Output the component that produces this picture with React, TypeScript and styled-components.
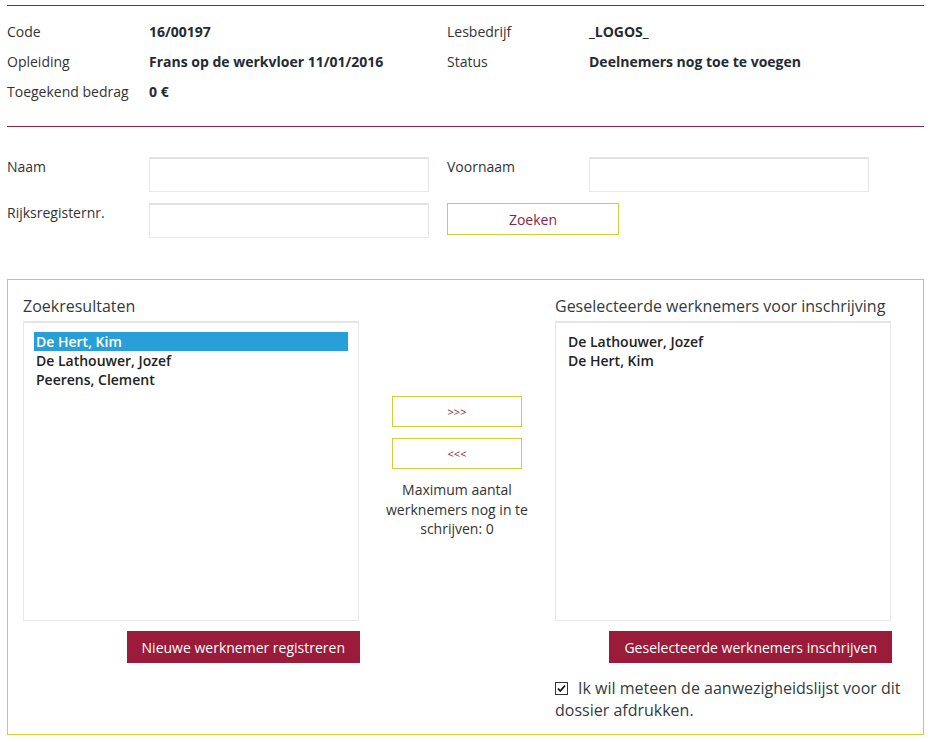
import React from "react";
import styled, { createGlobalStyle } from "styled-components";

const GlobalStyle = createGlobalStyle`
  body {
    margin: 0;
    background: #fff;
    font-family: "Open Sans", "Noto Sans", Arial, sans-serif;
    color: #333;
  }
`;

const maroon = "#8a2444";
const lime = "#d0d032";

const Page = styled.div`
  width: 917px;
  padding: 5px 7px 0 7px;
`;

const InfoSection = styled.section`
  border-top: 1px solid ${maroon};
  border-bottom: 1px solid ${maroon};
  padding: 16px 0 24px 0;
  display: grid;
  grid-template-columns: 142px 298px 142px 1fr;
  row-gap: 10px;
  font-size: 14px;
  line-height: 20px;
`;

const Label = styled.div`
  color: #333;
`;

const Value = styled.div`
  font-weight: 700;
  color: #222c32;
`;

const SearchForm = styled.form`
  margin-top: 30px;
  display: grid;
  grid-template-columns: 142px 298px 142px 1fr;
  row-gap: 11px;
  font-size: 14px;
  line-height: 20px;
  align-items: start;
`;

const Input = styled.input`
  box-sizing: border-box;
  width: 280px;
  height: 35px;
  border: 1px solid #e6e6e6;
  border-top: 2px solid #e2e2e2;
  background: #fff;
  outline: none;
`;

const OutlineButton = styled.button<{ $w: number; $h: number; $size?: number }>`
  box-sizing: border-box;
  width: ${(p) => p.$w}px;
  height: ${(p) => p.$h}px;
  border: 1px solid ${lime};
  background: #fff;
  color: ${maroon};
  font-family: "Open Sans", Arial, sans-serif;
  font-size: ${(p) => p.$size ?? 14}px;
  padding: 0;
  cursor: pointer;
`;

const Panel = styled.section`
  margin-top: 41px;
  border: 1px solid ${lime};
  padding: 15px 0 13px 15px;
  display: grid;
  grid-template-columns: 336px 196px 353px;
`;

const Column = styled.div`
  display: flex;
  flex-direction: column;
`;

const ColumnTitle = styled.h2`
  margin: 0 0 4px 0;
  font-size: 16px;
  font-weight: 400;
  line-height: 22px;
  color: #333b40;
`;

const ListBox = styled.div`
  box-sizing: border-box;
  width: 336px;
  height: 300px;
  border: 1px solid #e8e8e8;
  border-top: 2px solid #e4e4e4;
  padding: 9px 10px 0 10px;
`;

const ListItem = styled.div<{ $selected?: boolean }>`
  font-size: 14px;
  font-weight: 600;
  line-height: 19px;
  padding-left: 2px;
  color: ${(p) => (p.$selected ? "#fff" : "#222")};
  background: ${(p) => (p.$selected ? "#289fd8" : "transparent")};
`;

const ButtonRow = styled.div`
  width: 337px;
  display: flex;
  justify-content: flex-end;
  margin-top: 10px;
`;

const SolidButton = styled.button`
  height: 32px;
  padding: 0 15px;
  border: none;
  background: #9a1b3a;
  color: #fff;
  font-family: "Open Sans", Arial, sans-serif;
  font-size: 14px;
  cursor: pointer;
`;

const Middle = styled.div`
  display: flex;
  flex-direction: column;
  align-items: center;
  padding-top: 101px;
  gap: 11px;
`;

const MaxNote = styled.p`
  margin: 0;
  width: 150px;
  text-align: center;
  font-size: 14px;
  line-height: 19.5px;
  color: #333;
`;

const CheckLine = styled.label`
  display: block;
  margin-top: 14px;
  font-size: 16px;
  line-height: 22px;
  color: #333b40;
`;

const Box = styled.span`
  display: inline-block;
  box-sizing: border-box;
  width: 13px;
  height: 13px;
  border: 1px solid #333;
  margin-right: 10px;
  vertical-align: -1px;
  background: #fff;
  position: relative;

  svg {
    position: absolute;
    left: 0;
    top: 0;
  }
`;

const searchResults = ["De Hert, Kim", "De Lathouwer, Jozef", "Peerens, Clement"];
const selected = ["De Lathouwer, Jozef", "De Hert, Kim"];

export default function App() {
  return (
    <Page>
      <GlobalStyle />
      <InfoSection>
        <Label>Code</Label>
        <Value>16/00197</Value>
        <Label>Lesbedrijf</Label>
        <Value>_LOGOS_</Value>
        <Label>Opleiding</Label>
        <Value>Frans op de werkvloer 11/01/2016</Value>
        <Label>Status</Label>
        <Value>Deelnemers nog toe te voegen</Value>
        <Label>Toegekend bedrag</Label>
        <Value>0 €</Value>
      </InfoSection>

      <SearchForm onSubmit={(e) => e.preventDefault()}>
        <Label>Naam</Label>
        <Input />
        <Label>Voornaam</Label>
        <Input />
        <Label>Rijksregisternr.</Label>
        <Input />
        <OutlineButton type="submit" $w={172} $h={32}>
          Zoeken
        </OutlineButton>
      </SearchForm>

      <Panel>
        <Column>
          <ColumnTitle>Zoekresultaten</ColumnTitle>
          <ListBox>
            {searchResults.map((name, i) => (
              <ListItem key={name} $selected={i === 0}>
                {name}
              </ListItem>
            ))}
          </ListBox>
          <ButtonRow>
            <SolidButton>Nieuwe werknemer registreren</SolidButton>
          </ButtonRow>
        </Column>

        <Middle>
          <OutlineButton $w={130} $h={31} $size={11}>
            &gt;&gt;&gt;
          </OutlineButton>
          <OutlineButton $w={130} $h={31} $size={11}>
            &lt;&lt;&lt;
          </OutlineButton>
          <MaxNote>Maximum aantal werknemers nog in te schrijven: 0</MaxNote>
        </Middle>

        <Column>
          <ColumnTitle>Geselecteerde werknemers voor inschrijving</ColumnTitle>
          <ListBox>
            {selected.map((name) => (
              <ListItem key={name}>{name}</ListItem>
            ))}
          </ListBox>
          <ButtonRow>
            <SolidButton>Geselecteerde werknemers inschrijven</SolidButton>
          </ButtonRow>
          <CheckLine>
            <Box>
              <svg width="11" height="11" viewBox="0 0 11 11">
                <path d="M2 5.5 L4.3 8 L9 2.5" fill="none" stroke="#111" strokeWidth="1.8" />
              </svg>
            </Box>
            Ik wil meteen de aanwezigheidslijst voor dit dossier afdrukken.
          </CheckLine>
        </Column>
      </Panel>
    </Page>
  );
}
